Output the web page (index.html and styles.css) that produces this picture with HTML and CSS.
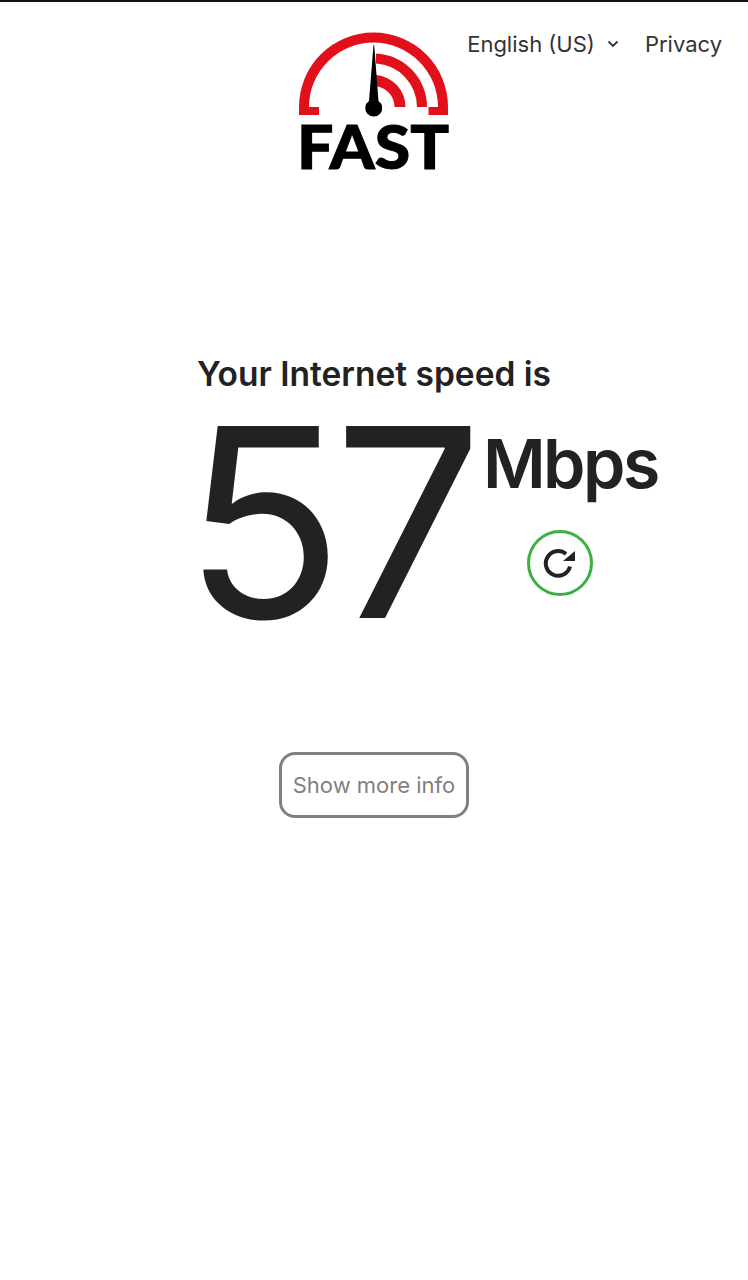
FILE: index.html
```html
<!DOCTYPE html>
<html lang="en">

<head>
    <meta charset="UTF-8">
    <meta name="viewport" content="width=device-width, initial-scale=1.0">
    <title>Internet Speed Test</title>
    <link rel="stylesheet" href="styles.css">
</head>

<body>
    <header class="top-bar">
        <a class="logo" href="#" aria-label="FAST">
            <svg width="152" height="156" viewBox="0 0 152 156">
                <path class="logo-red" d="M1 84V76A74.500 74.500 0 0 1 150 76V84H130.500V76H140A64.500 64.500 0 0 0 11 76H21V84Z" />
                <path class="logo-red" d="M78 22.600A53.500 53.500 0 0 1 129 76H119A43.500 43.500 0 0 0 78 32.600Z" />
                <path class="logo-red" d="M78 44.100A32 32 0 0 1 107.500 76H96.500A21 21 0 0 0 78 55.200Z" />
                <path class="logo-black" d="M75.500 14L76.200 14L80.500 70A8.500 8.500 0 1 1 71 70Z" />
                <text class="logo-text" x="-1" y="137.500" textLength="152" lengthAdjust="spacingAndGlyphs">FAST</text>
            </svg>
        </a>
        <nav class="top-nav">
            <span class="lang">English (US)
                <svg class="chevron" width="12" height="8" viewBox="0 0 12 8">
                    <path d="M1.500 1.500L6 6L10.500 1.500" />
                </svg>
            </span>
            <a href="#">Privacy</a>
        </nav>
    </header>

    <main class="speed">
        <h1 class="speed-title">Your Internet speed is</h1>
        <div class="speed-row">
            <div class="speed-value">57</div>
            <div class="speed-side">
                <div class="speed-unit">Mbps</div>
                <button class="retry" aria-label="Run again">
                    <svg width="34" height="34" viewBox="0 0 34 34">
                        <path class="retry-arc" d="M27 20.500A12.300 12.300 0 1 1 23 8" />
                        <path class="retry-head" d="M32 5V15H20Z" />
                    </svg>
                </button>
            </div>
        </div>
        <button class="more-info">Show more info</button>
    </main>
</body>

</html>
```

FILE: styles.css
```css
* {
    margin: 0;
    padding: 0;
    box-sizing: border-box;
}

body {
    width: 748px;
    height: 1280px;
    background-color: #fff;
    border-top: 2px solid #111;
    font-family: Inter, "Noto Sans", sans-serif;
    color: #222;
    overflow: hidden;
}

.top-bar {
    display: flex;
    justify-content: center;
    height: 170px;
    padding-top: 29px;
    position: relative;
}

.logo {
    display: block;
    height: 141px;
}

.logo-red {
    fill: #e2101a;
}

.logo-black {
    fill: #000;
}

.logo-text {
    font-family: Lato, sans-serif;
    font-weight: 900;
    font-size: 61px;
    fill: #000;
    stroke: #000;
    stroke-width: 1px;
}

/* sits over the header, logo stays centred */
.top-nav {
    position: absolute;
    top: 27px;
    right: 26px;
    display: flex;
    gap: 26px;
    font-size: 22px;
    line-height: 30px;
    color: #333;
}

.top-nav a {
    color: inherit;
    text-decoration: none;
}

.lang {
    display: flex;
    align-items: center;
    gap: 12px;
}

.chevron path {
    fill: none;
    stroke: #333;
    stroke-width: 1.800;
}

.speed {
    display: flex;
    flex-direction: column;
    align-items: center;
    padding-top: 186px;
}

.speed-title {
    font-size: 33.500px;
    font-weight: 600;
    line-height: 32px;
    color: #222;
}

.speed-row {
    display: flex;
    align-self: stretch;
    padding-left: 183px;
    height: 280px;
}

.speed-value {
    font-size: 264px;
    font-weight: 400;
    line-height: 264px;
    letter-spacing: -10px;
    color: #222;
}

.speed-side {
    display: flex;
    flex-direction: column;
    align-items: flex-start;
    margin-left: 10px;
    padding-top: 33px;
}

.speed-unit {
    font-size: 68px;
    font-weight: 600;
    line-height: 80px;
    letter-spacing: -2.500px;
}

.retry {
    display: flex;
    align-items: center;
    justify-content: center;
    width: 66px;
    height: 66px;
    margin-top: 27px;
    margin-left: 44px;
    border: 3px solid #3cb043;
    border-radius: 50%;
    background: none;
}

.retry-arc {
    fill: none;
    stroke: #222;
    stroke-width: 4;
}

.retry-head {
    fill: #222;
}

.more-info {
    width: 190px;
    height: 66px;
    margin-top: 82px;
    border: 3px solid #808080;
    border-radius: 16px;
    background: #fff;
    color: #808080;
    font-family: inherit;
    font-size: 22px;
}
```
